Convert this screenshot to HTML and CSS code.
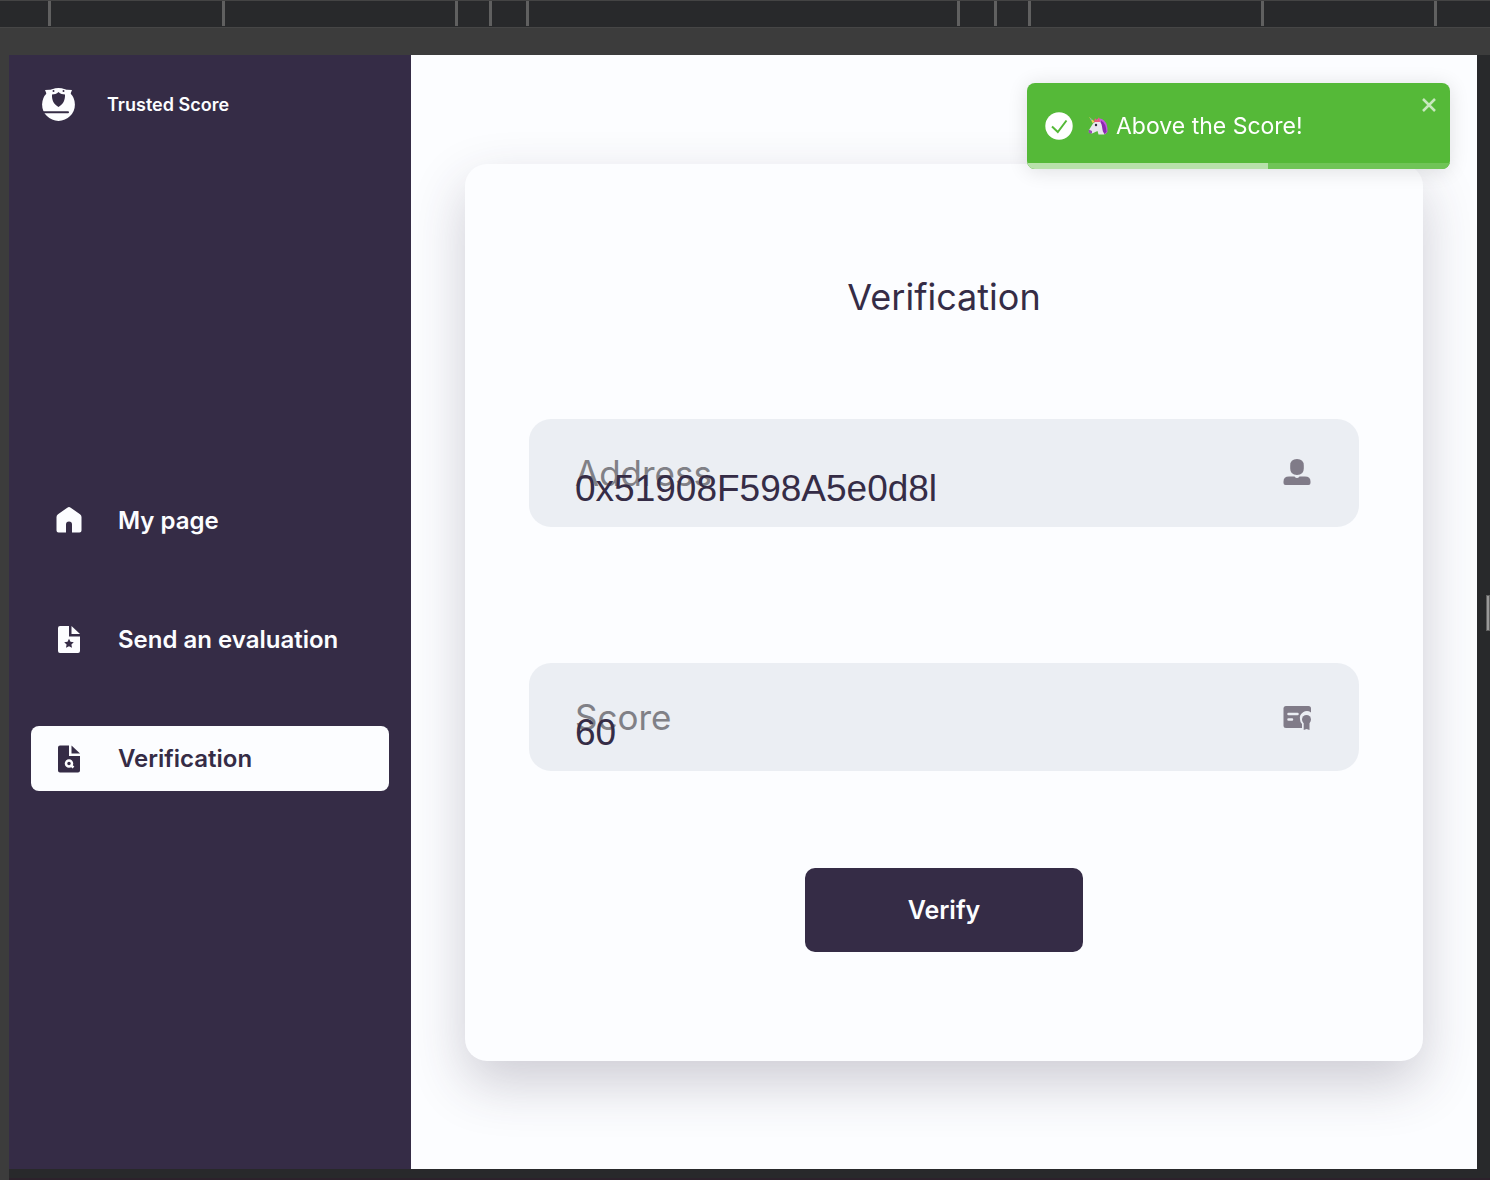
FILE: index.html
```html
<!DOCTYPE html>
<html lang="en">
<head>
<meta charset="utf-8">
<meta name="viewport" content="width=device-width, initial-scale=1">
<title>Trusted Score</title>
<link rel="stylesheet" href="styles.css">
</head>
<body>
<div class="ruler" aria-hidden="true">
  <span class="seg seg-l"></span><span class="seg seg-xl"></span><span class="seg seg-s"></span><span class="seg seg-m"></span><span class="seg seg-center"></span><span class="seg seg-m"></span><span class="seg seg-s"></span><span class="seg seg-xl"></span><span class="seg seg-l seg-last"></span>
</div>
<div class="viewport">
  <div class="stage">
    <div class="app">
      <aside class="sidebar">
        <div class="brand">
          <svg class="brand-logo" viewBox="0 0 34 34" aria-hidden="true">
            <circle cx="17.500" cy="16.500" r="16.400" fill="#fcfdff"/>
            <path d="M4 2 L13 1.500 L12 5 L6 7Z M31 2 L22 1.500 L22 5 L29 7Z" fill="#fcfdff"/>
            <path d="M17.500 4 C15.500 5.800 13.500 6.500 11 6.500 C10.700 12 12.500 16 17.500 19 C22.500 16 24.200 12 24 6.500 C21.500 6.500 19.500 5.800 17.500 4Z" fill="#352c46"/>
            <circle cx="12.500" cy="3" r="1" fill="#352c46"/><circle cx="22.500" cy="3" r="1" fill="#352c46"/>
            <path d="M1 23.300H27a1 1 0 0 1 0 2H2Z" fill="#352c46"/>
          </svg>
          <span class="brand-name">Trusted Score</span>
        </div>
        <nav class="nav">
          <a class="nav-item" href="#mypage">
            <svg class="icon" viewBox="0 0 28 28" aria-hidden="true"><path fill="currentColor" d="M12.300 .700Q14-.600 15.700 .700L25 7.300Q26.500 8.400 26.500 10V23.500Q26.500 25.500 24.500 25.500H17V17.500a3 3 0 0 0-6 0V25.500H3.500Q1.500 25.500 1.500 23.500V10Q1.500 8.400 3 7.300Z"/></svg>
            <span>My page</span>
          </a>
          <a class="nav-item" href="#send">
            <svg class="icon" viewBox="0 0 28 28" aria-hidden="true"><path fill="currentColor" fill-rule="evenodd" d="M5 0H14V10.500H25V25a2 2 0 0 1-2 2H5a2 2 0 0 1-2-2V2a2 2 0 0 1 2-2ZM14 12.700L12.500 15.800 9.200 16.200 11.600 18.500 11 21.800 14 20.200 17 21.800 16.400 18.500 18.800 16.200 15.500 15.800Z"/><path fill="currentColor" d="M16.500 0 25 8H16.500Z"/></svg>
            <span>Send an evaluation</span>
          </a>
          <a class="nav-item nav-item-active" href="#verification" aria-current="page">
            <svg class="icon" viewBox="0 0 28 28" aria-hidden="true"><path fill="currentColor" d="M5 .500H14V11H25V25.500a2 2 0 0 1-2 2H5a2 2 0 0 1-2-2V2.500a2 2 0 0 1 2-2Z"/><path fill="currentColor" d="M16.500 .500 25 8.500H16.500Z"/><circle cx="14" cy="18.500" r="3" fill="none" stroke="#fcfdff" stroke-width="2.500"/><path d="M15.500 20 18.500 22.500" stroke="#fcfdff" stroke-width="2.500"/></svg>
            <span>Verification</span>
          </a>
        </nav>
      </aside>
      <main class="main">
        <form class="card">
          <h1 class="title">Verification</h1>
          <div class="fields">
            <div class="field">
              <label class="field-label" for="address">Address</label>
              <input class="field-input" id="address" type="text" value="0x51908F598A5e0d8l">
              <svg class="field-icon" viewBox="0 0 28 28" aria-hidden="true"><path fill="currentColor" d="M7.200 7.500Q7.200 1 14 1t6.800 6.500v3Q20.800 17 14 17T7.200 10.500ZM.500 25V23.500Q.500 18.500 6 18.500H11.500Q14 21.500 16.500 18.500H22Q27.500 18.500 27.500 23.500V25Q27.500 27 25.500 27H2.500Q.500 27 .500 25Z"/></svg>
            </div>
            <div class="field">
              <label class="field-label" for="score">Score</label>
              <input class="field-input" id="score" type="text" value="60">
              <svg class="field-icon" viewBox="0 0 28 28" aria-hidden="true"><rect x=".500" y="4" width="27.500" height="22" rx="2.500" fill="currentColor"/><path d="M5.500 12H14.500M5.500 17.500H9" stroke="#ebeef3" stroke-width="2.500" stroke-linecap="round"/><path fill="#ebeef3" d="M28 10.500A7 7 0 0 0 17 17.500Q17 20 19 22V28H28Z"/><circle cx="23.500" cy="17.500" r="4.500" fill="currentColor"/><path fill="currentColor" d="M20.700 19H26.500V28L23.600 27 20.700 28Z"/></svg>
            </div>
          </div>
          <button class="submit" type="button">Verify</button>
        </form>
      </main>
    </div>
  </div>
</div>
<div class="toast" role="alert">
  <svg class="toast-check" viewBox="0 0 28 28" aria-hidden="true"><circle cx="14" cy="14" r="13.700" fill="#fff"/><path d="M7 14.500 12.800 20 21.500 8.500" fill="none" stroke="#55b938" stroke-width="2"/></svg>
  <svg class="toast-unicorn" viewBox="0 0 20 20" role="img" aria-label="Unicorn">
    <path d="M8 4Q12 1 16 4.500 20 8 19.500 16L17 18.500 12 12Z" fill="#c25bdc"/>
    <path d="M13 4.500Q18 7 18.500 16L16 18 13 11Z" fill="#8a28b0"/>
    <path d="M5 7.500 9 4.500Q13.500 5.500 14 10.500 14 14.500 16.500 18.500H10.500L9.500 15 4 17.500 .800 16.500 1 14Z" fill="#e9e6ee"/>
    <path d="M.800 13.500 4 15 4 17.500 .800 17Z" fill="#9c4bb8"/>
    <path d="M1 .800 6.500 5.500 4.800 7.300Z" fill="#f2cf5b"/><path d="M2 1.700 4 3.400 3.300 4.700Z" fill="#43b9c8"/>
    <path d="M6 6 7 2 9 4.500 11 1 12 6Z" fill="#ef5a79"/>
    <circle cx="8" cy="9" r="1.200" fill="#32283b"/>
  </svg>
  <span class="toast-text">Above the Score!</span>
  <button class="toast-close" type="button" aria-label="Close"><svg viewBox="0 0 14 14" aria-hidden="true"><path d="M1 1 13 13M13 1 1 13" stroke="currentColor" stroke-width="2.500"/></svg></button>
  <div class="toast-progress"><div class="toast-bar" style="width:57%"></div></div>
</div>
<div class="drag-handle" aria-hidden="true"></div>
</body>
</html>
```
FILE: styles.css
```css
* { box-sizing: border-box; }

body {
  margin: 0;
  min-height: 100vh;
  display: flex;
  flex-direction: column;
  background: #3c3c3c;
  color: #352c46;
  font-family: Inter, "Liberation Sans", sans-serif;
}

.ruler {
  display: flex;
  justify-content: center;
  height: 28px;
  padding: 0 6px 1px 0;
  overflow: hidden;
  background: #28292b;
  border-top: 1px solid #444;
  border-bottom: 1px solid #464646;
}
.seg { flex: none; border-left: 3px solid #606060; }
.seg-s { width: 34px; }
.seg-m { width: 37px; }
.seg-l { width: 174px; }
.seg-xl { width: 233px; }
.seg-center { width: 431px; }
.seg-last { width: 176px; border-right: 3px solid #606060; }

.viewport {
  flex: 1;
  display: flex;
  padding: 27px 0 0 9px;
}
.stage {
  flex: 1;
  display: flex;
  padding: 0 13px 9px 0;
  background: #28292b;
  border-bottom: 2px solid #2c212b;
}
.app {
  flex: 1;
  display: flex;
  background: #fcfdff;
}

.sidebar {
  flex: 0 0 402px;
  display: flex;
  flex-direction: column;
  padding: 0 22px 44px;
  background: #352c46;
  color: #fcfdff;
}
.brand {
  display: flex;
  align-items: center;
  gap: 32px;
  height: 99px;
  padding-left: 10px;
  font-size: 18px;
  font-weight: 600;
}
.brand-logo { width: 34px; height: 34px; }
.nav {
  flex: 1;
  display: flex;
  flex-direction: column;
  justify-content: center;
  gap: 54px;
}
.nav-item {
  display: flex;
  align-items: center;
  gap: 35px;
  height: 65px;
  padding: 0 24px;
  border-radius: 8px;
  color: inherit;
  font-size: 24px;
  font-weight: 600;
  text-decoration: none;
}
.nav-item-active { background: #fcfdff; color: #352c46; }
.icon { width: 28px; height: 28px; }

.main {
  flex: 1;
  display: flex;
  padding: 109px 54px 108px;
}
.card {
  flex: 1;
  display: flex;
  flex-direction: column;
  align-items: center;
  gap: 97px;
  padding: 108px 64px;
  border-radius: 22px;
  background: #fcfdff;
  box-shadow: 0 22px 54px rgba(53, 44, 70, 0.23);
}
.title {
  margin: 0;
  font-size: 36px;
  line-height: 50px;
  font-weight: 400;
}
.fields {
  align-self: stretch;
  display: flex;
  flex-direction: column;
  gap: 136px;
}
.field {
  position: relative;
  border-radius: 22px;
  background: #ebeef3;
}
.field-input {
  position: relative;
  display: block;
  width: 100%;
  height: 108px;
  padding: 32px 96px 0 46px;
  border: 0;
  border-radius: 22px;
  background: transparent;
  color: #352c46;
  font-family: "Liberation Sans", sans-serif;
  font-size: 37px;
}
.field-label {
  position: absolute;
  left: 46px;
  top: 32px;
  color: #808086;
  font-size: 35px;
  line-height: 44px;
}
.field-icon {
  position: absolute;
  right: 48px;
  top: 39px;
  width: 28px;
  height: 28px;
  color: #807b88;
}
.submit {
  width: 278px;
  height: 84px;
  border: 0;
  border-radius: 10px;
  background: #352c46;
  color: #fcfdff;
  font-family: inherit;
  font-size: 25px;
  font-weight: 600;
}

.toast {
  position: fixed;
  top: 83px;
  right: 40px;
  display: flex;
  align-items: center;
  width: 423px;
  height: 86px;
  padding: 0 18px;
  overflow: hidden;
  border-radius: 8px;
  background: #55b938;
  box-shadow: 0 2px 20px rgba(0, 0, 0, 0.12);
  color: #fff;
  font-size: 23px;
}
.toast-check { width: 28px; height: 28px; margin-right: 15px; }
.toast-unicorn { width: 20px; height: 20px; margin-right: 8px; }
.toast-close {
  position: absolute;
  top: 15px;
  right: 14px;
  display: flex;
  padding: 0;
  border: 0;
  background: none;
  color: #c8e8be;
}
.toast-close svg { width: 14px; height: 14px; }
.toast-progress {
  position: absolute;
  left: 0;
  right: 0;
  bottom: 0;
  height: 6px;
  background: #70c457;
}
.toast-bar { height: 100%; background: #b8e1aa; }

.drag-handle {
  position: fixed;
  right: 0;
  top: 595px;
  width: 4px;
  height: 36px;
  border: 1px solid #606060;
  background: #999;
}
```
